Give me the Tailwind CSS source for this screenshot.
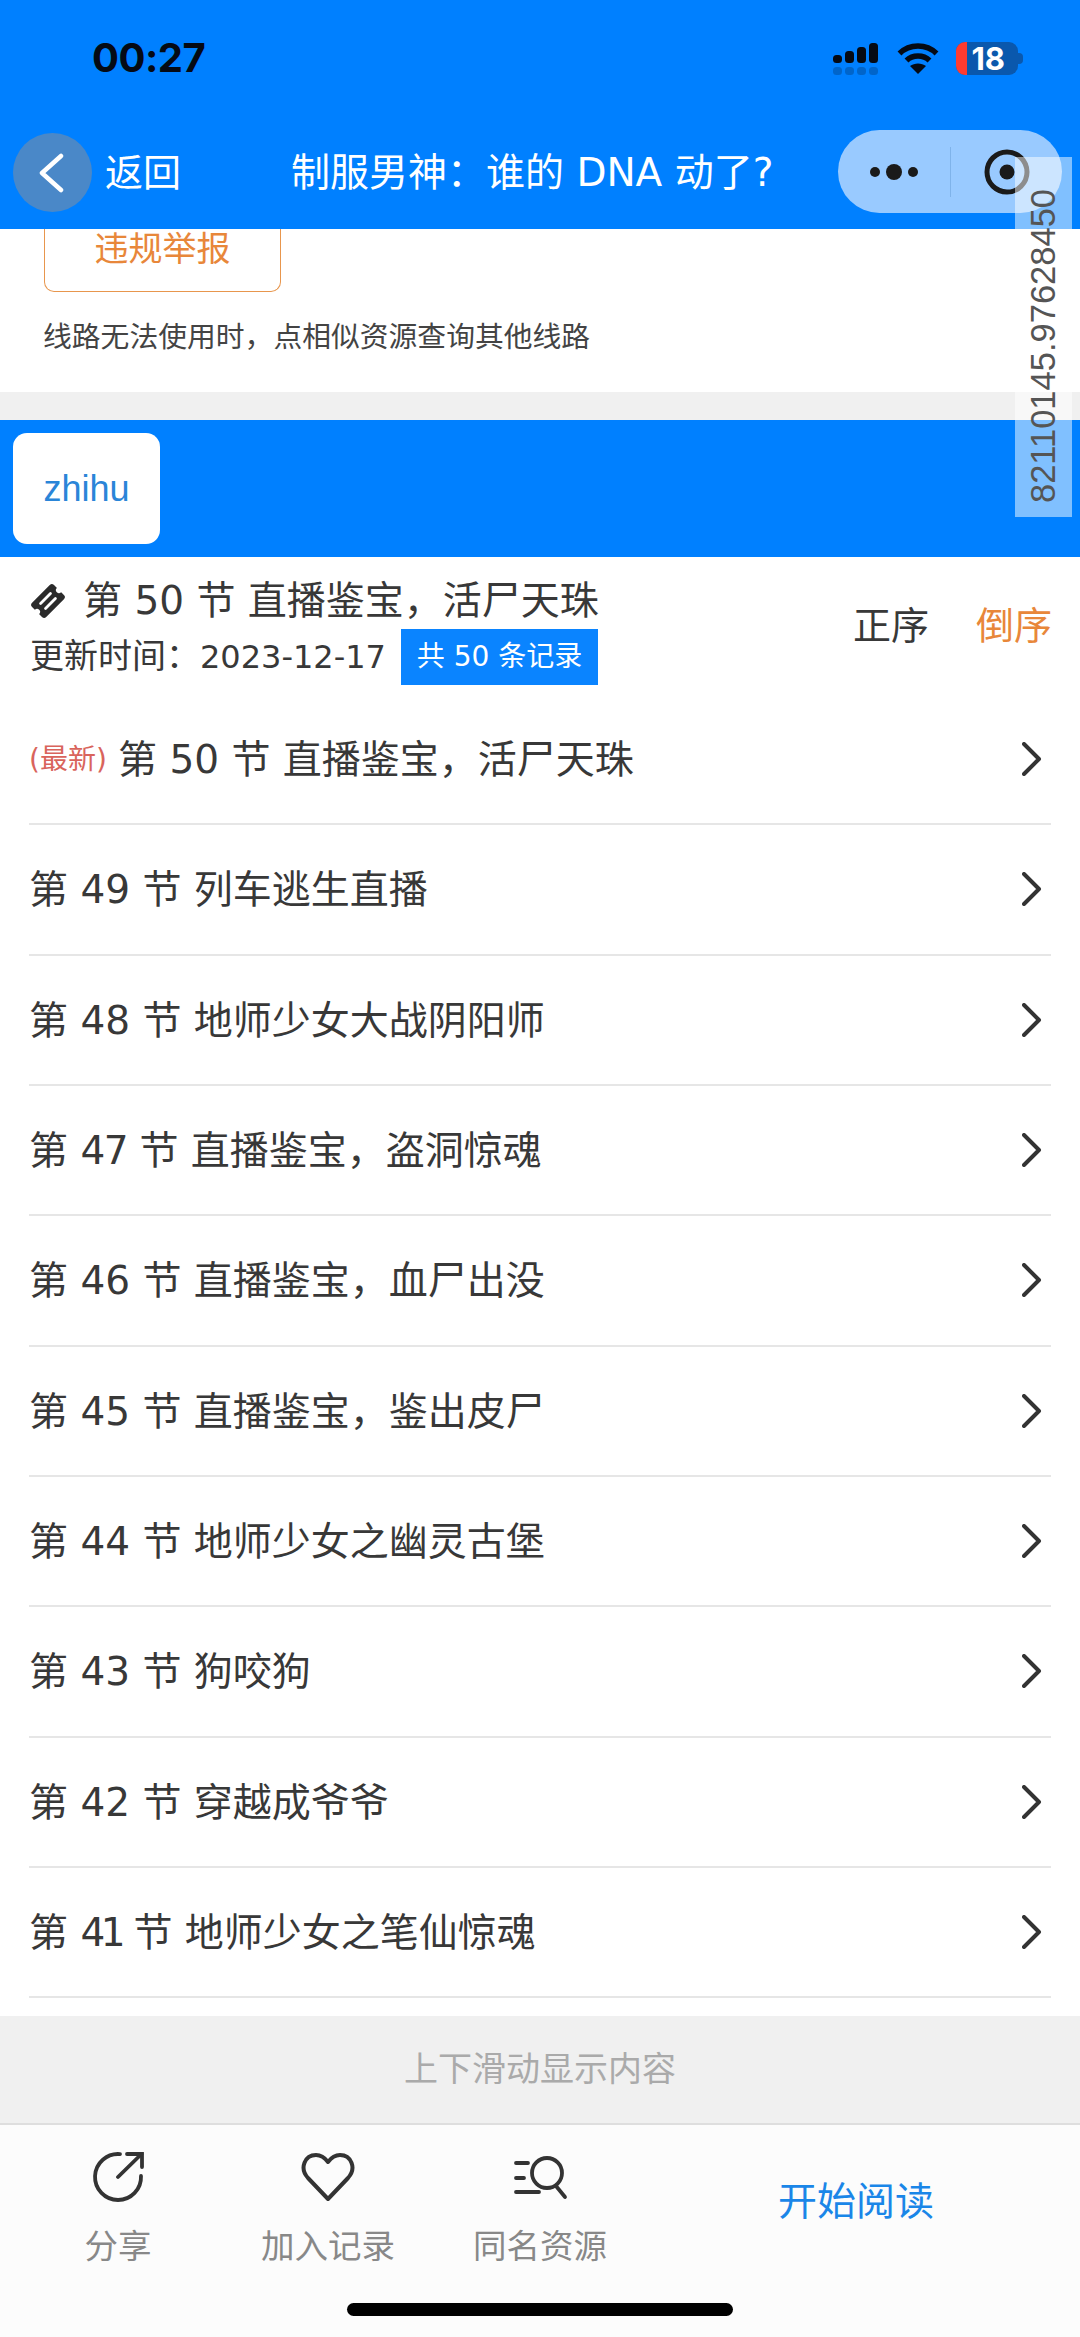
<!DOCTYPE html>
<html lang="zh">
<head>
<meta charset="utf-8">
<script src="https://cdn.jsdelivr.net/npm/@tailwindcss/browser@4"></script>
</head>
<body class="m-0">
<div class="relative w-[1080px] h-[2337px] overflow-hidden bg-white flex flex-col font-['DejaVu_Sans','Noto_Sans_CJK_SC',sans-serif] text-[#383838]">
  <!-- header -->
  <header class="relative z-10 h-[229px] shrink-0 bg-[#0080ff] flex flex-col">
    <div class="h-[130px] shrink-0 flex items-start justify-between">
      <span class="ml-[92px] mt-[33px] text-[40px] leading-[50px] font-bold text-[#050a14] font-['Inter','Liberation_Sans',sans-serif] tracking-[-0.5px]">00:27</span>
      <div class="mt-[42px] mr-[62px] flex items-start">
        <svg class="w-[46px] h-[34px] mr-[18px]" viewBox="0 0 46 34">
          <g fill="#050a14"><rect x="0" y="13" width="9" height="8" rx="3.5"/><rect x="12" y="9" width="9" height="12" rx="3.5"/><rect x="24" y="5" width="9" height="16" rx="3.5"/><rect x="36" y="1" width="9" height="20" rx="3.5"/></g>
          <g fill="#050a14" opacity=".22"><rect x="0" y="25" width="9" height="8" rx="3.5"/><rect x="12" y="25" width="9" height="8" rx="3.5"/><rect x="24" y="25" width="9" height="8" rx="3.5"/><rect x="36" y="25" width="9" height="8" rx="3.5"/></g>
        </svg>
        <svg class="w-[42px] h-[32px] mr-[17px]" viewBox="0 0 42 32" fill="none" stroke="#050a14" stroke-width="5.500">
          <path d="M2.500 11.500C12.500 1.500 29.500 1.500 39.500 11.500"/><path d="M9.500 18.500C15.500 12.500 26.500 12.500 32.500 18.500"/><path d="M21 32l-8-8c4.500-3.500 11.500-3.500 16 0z" fill="#050a14" stroke="none"/>
        </svg>
        <div class="relative w-[62px] h-[33px] rounded-[9px] bg-[#0a58ad] flex items-center justify-end pr-[13px]">
          <span class="absolute left-0 top-0 bottom-0 w-[11px] rounded-l-[9px] bg-[#ff3b30]"></span>
          <span class="text-[31px] leading-[33px] font-bold text-white font-['Inter','Liberation_Sans',sans-serif]">18</span>
          <span class="absolute -right-[5px] top-[11px] w-[5px] h-[11px] rounded-r-[4px] bg-[#0a58ad]"></span>
        </div>
      </div>
    </div>
    <div class="relative h-[99px] shrink-0">
      <div class="absolute left-[13px] top-[3px] w-[79px] h-[79px] rounded-full bg-[#4a88c8] flex items-center justify-center">
        <svg class="w-[26px] h-[40px] mr-[4px]" viewBox="0 0 26 40" fill="none" stroke="#fff" stroke-width="4.500" stroke-linecap="round" stroke-linejoin="round"><path d="M23 3L4 20l19 17"/></svg>
      </div>
      <span class="absolute left-[105px] top-[20px] text-[38px] leading-[46px] text-white">返回</span>
      <span class="absolute left-[291px] top-[20px] text-[39px] leading-[46px] text-white whitespace-nowrap">制服男神：谁的 DNA 动了?</span>
      <div class="absolute left-[838px] top-0 w-[224px] h-[83px] rounded-[42px] bg-[#99caff] flex items-center">
        <svg class="ml-[32px] w-[54px] h-[20px]" viewBox="0 0 54 20" fill="#1a1a1a"><circle cx="5" cy="10" r="5"/><circle cx="24" cy="10" r="8"/><circle cx="43" cy="10" r="5"/></svg>
        <span class="ml-[26px] w-px h-[50px] bg-[#7fb3ea]"></span>
        <svg class="ml-[33px] w-[46px] h-[46px]" viewBox="0 0 46 46"><circle cx="23" cy="23" r="20" fill="none" stroke="#1a1a1a" stroke-width="5"/><circle cx="23" cy="23" r="7.500" fill="#1a1a1a"/></svg>
      </div>
    </div>
  </header>

  <!-- top panel -->
  <section class="shrink-0 h-[163px] bg-white px-[43px] relative">
    <div class="ml-[1px] h-[63px] w-[237px] pb-[22px] border-x-[1.5px] border-b-[1.5px] border-[#e8964d] rounded-b-[10px] flex items-center justify-center text-[34px] leading-[40px] text-[#e8873a]">违规举报</div>
    <p class="mt-[26px] text-[28.800px] leading-[38px] text-[#444] whitespace-nowrap">线路无法使用时，点相似资源查询其他线路</p>
  </section>
  <div class="shrink-0 h-[28px] bg-[#f0f0f0]"></div>

  <!-- source tab -->
  <div class="shrink-0 h-[137px] bg-[#0080ff] pl-[13px] pt-[13px]">
    <div class="w-[147px] h-[111px] rounded-[14px] bg-white flex items-center justify-center text-[36px] text-[#2a85d8] font-['Liberation_Sans',sans-serif]">zhihu</div>
  </div>

  <!-- summary -->
  <section class="shrink-0 h-[138px] relative px-[30px]">
    <div class="flex items-center h-[44px] mt-[22px]">
      <svg class="w-[36px] h-[36px] mr-[17px] shrink-0" viewBox="0 0 36 36"><g transform="rotate(-45 18 18)"><rect x="2.500" y="8" width="31" height="20" rx="3" fill="#2b2b2b"/><circle cx="2.500" cy="18" r="3" fill="#fff"/><circle cx="33.500" cy="18" r="3" fill="#fff"/><path d="M11 14.500h14M11 21.500h14" stroke="#fff" stroke-width="2.800" stroke-linecap="round"/></g></svg>
      <span class="text-[39px] leading-[44px] whitespace-nowrap">第 50 节 直播鉴宝，活尸天珠</span>
    </div>
    <div class="flex items-center mt-[5px]">
      <span class="text-[34px] leading-[56px] whitespace-nowrap w-[371px]">更新时间：<span class="text-[32px]">2023-12-17</span></span>
      <span class="h-[56px] w-[197px] bg-[#0a84ff] text-white text-[28px] leading-[56px] text-center whitespace-nowrap">共 50 条记录</span>
    </div>
    <div class="absolute left-[853px] top-[46px] flex gap-[47px] text-[38px] leading-[46px]">
      <span>正序</span><span class="text-[#e8873a]">倒序</span>
    </div>
  </section>

  <!-- list -->
  <ul class="shrink-0 flex flex-col px-[29px]">
    <li class="h-[130.330px] border-b-[2px] border-[#e6e6e6] flex items-center justify-between"><span class="pt-[2px] text-[39px] leading-[48px] whitespace-nowrap flex items-center"><span class="text-[28px] text-[#d9645c] w-[89px]">(最新)</span>第 50 节 直播鉴宝，活尸天珠</span><svg class="w-[20px] h-[34px] mr-[9px]" viewBox="0 0 20 34" fill="none" stroke="#333" stroke-width="4" stroke-linecap="round" stroke-linejoin="round"><path d="M2 2l15 15L2 32"/></svg></li>
    <li class="h-[130.330px] border-b-[2px] border-[#e6e6e6] flex items-center justify-between"><span class="pt-[2px] text-[39px] leading-[48px] whitespace-nowrap">第 49 节 列车逃生直播</span><svg class="w-[20px] h-[34px] mr-[9px]" viewBox="0 0 20 34" fill="none" stroke="#333" stroke-width="4" stroke-linecap="round" stroke-linejoin="round"><path d="M2 2l15 15L2 32"/></svg></li>
    <li class="h-[130.330px] border-b-[2px] border-[#e6e6e6] flex items-center justify-between"><span class="pt-[2px] text-[39px] leading-[48px] whitespace-nowrap">第 48 节 地师少女大战阴阳师</span><svg class="w-[20px] h-[34px] mr-[9px]" viewBox="0 0 20 34" fill="none" stroke="#333" stroke-width="4" stroke-linecap="round" stroke-linejoin="round"><path d="M2 2l15 15L2 32"/></svg></li>
    <li class="h-[130.330px] border-b-[2px] border-[#e6e6e6] flex items-center justify-between"><span class="pt-[2px] text-[39px] leading-[48px] whitespace-nowrap">第 <span class="tracking-[-1.5px]">47</span> 节 直播鉴宝，盗洞惊魂</span><svg class="w-[20px] h-[34px] mr-[9px]" viewBox="0 0 20 34" fill="none" stroke="#333" stroke-width="4" stroke-linecap="round" stroke-linejoin="round"><path d="M2 2l15 15L2 32"/></svg></li>
    <li class="h-[130.330px] border-b-[2px] border-[#e6e6e6] flex items-center justify-between"><span class="pt-[2px] text-[39px] leading-[48px] whitespace-nowrap">第 46 节 直播鉴宝，血尸出没</span><svg class="w-[20px] h-[34px] mr-[9px]" viewBox="0 0 20 34" fill="none" stroke="#333" stroke-width="4" stroke-linecap="round" stroke-linejoin="round"><path d="M2 2l15 15L2 32"/></svg></li>
    <li class="h-[130.330px] border-b-[2px] border-[#e6e6e6] flex items-center justify-between"><span class="pt-[2px] text-[39px] leading-[48px] whitespace-nowrap">第 45 节 直播鉴宝，鉴出皮尸</span><svg class="w-[20px] h-[34px] mr-[9px]" viewBox="0 0 20 34" fill="none" stroke="#333" stroke-width="4" stroke-linecap="round" stroke-linejoin="round"><path d="M2 2l15 15L2 32"/></svg></li>
    <li class="h-[130.330px] border-b-[2px] border-[#e6e6e6] flex items-center justify-between"><span class="pt-[2px] text-[39px] leading-[48px] whitespace-nowrap">第 44 节 地师少女之幽灵古堡</span><svg class="w-[20px] h-[34px] mr-[9px]" viewBox="0 0 20 34" fill="none" stroke="#333" stroke-width="4" stroke-linecap="round" stroke-linejoin="round"><path d="M2 2l15 15L2 32"/></svg></li>
    <li class="h-[130.330px] border-b-[2px] border-[#e6e6e6] flex items-center justify-between"><span class="pt-[2px] text-[39px] leading-[48px] whitespace-nowrap">第 43 节 狗咬狗</span><svg class="w-[20px] h-[34px] mr-[9px]" viewBox="0 0 20 34" fill="none" stroke="#333" stroke-width="4" stroke-linecap="round" stroke-linejoin="round"><path d="M2 2l15 15L2 32"/></svg></li>
    <li class="h-[130.330px] border-b-[2px] border-[#e6e6e6] flex items-center justify-between"><span class="pt-[2px] text-[39px] leading-[48px] whitespace-nowrap">第 42 节 穿越成爷爷</span><svg class="w-[20px] h-[34px] mr-[9px]" viewBox="0 0 20 34" fill="none" stroke="#333" stroke-width="4" stroke-linecap="round" stroke-linejoin="round"><path d="M2 2l15 15L2 32"/></svg></li>
    <li class="h-[130.330px] border-b-[2px] border-[#e6e6e6] flex items-center justify-between"><span class="pt-[2px] text-[39px] leading-[48px] whitespace-nowrap">第 <span class="tracking-[-4.5px]">41</span> 节 地师少女之笔仙惊魂</span><svg class="w-[20px] h-[34px] mr-[9px]" viewBox="0 0 20 34" fill="none" stroke="#333" stroke-width="4" stroke-linecap="round" stroke-linejoin="round"><path d="M2 2l15 15L2 32"/></svg></li>
  </ul>

  <div class="flex-1"></div>

  <!-- hint -->
  <div class="shrink-0 h-[107px] bg-[#f0f0f0] flex items-center justify-center text-[34px] text-[#aaaaaa]">上下滑动显示内容</div>

  <!-- bottom bar -->
  <footer class="relative shrink-0 h-[214px] bg-[#fcfcfc] border-t-[2px] border-[#dedede]">
    <div class="flex pt-[26px]">
      <div class="w-[236px] flex flex-col items-center">
        <svg class="w-[52px] h-[52px]" viewBox="0 0 52 52" fill="none" stroke="#333" stroke-width="3.800" stroke-linecap="round"><path d="M28 3.100A23 23 0 1 0 49 25"/><path d="M26 26L49.500 3"/><path d="M35 3h15v13"/></svg>
        <span class="mt-[22px] text-[33.500px] leading-[44px] text-[#888]">分享</span>
      </div>
      <div class="w-[184px] flex flex-col items-center">
        <svg class="w-[54px] h-[52px]" viewBox="0 0 54 52" fill="none" stroke="#333" stroke-width="4" stroke-linejoin="round"><path d="M27 48L7 27C-2 17 4 4 15 4C20 4 24 7 27 11C30 7 34 4 39 4C50 4 56 17 47 27Z"/></svg>
        <span class="mt-[22px] text-[33.500px] leading-[44px] text-[#888]">加入记录</span>
      </div>
      <div class="w-[240px] flex flex-col items-center">
        <svg class="w-[56px] h-[52px]" viewBox="0 0 56 52" fill="none" stroke="#333" stroke-width="3.800" stroke-linecap="round"><circle cx="35" cy="22" r="15"/><path d="M44 35l9 11"/><path d="M4 12h12M4 27h8M4 41h23"/></svg>
        <span class="mt-[22px] text-[33.500px] leading-[44px] text-[#888]">同名资源</span>
      </div>
      <div class="ml-[118px] mt-[27px] text-[39px] leading-[48px] text-[#1a86e8]">开始阅读</div>
    </div>
    <div class="absolute left-[347px] top-[178px] w-[386px] h-[13px] rounded-full bg-black"></div>
  </footer>

  <!-- watermark -->
  <div class="absolute z-20 left-[1015px] top-[157px] w-[57px] h-[360px] bg-white/50 flex items-center justify-center">
    <span class="block translate-y-[9px] -rotate-90 whitespace-nowrap text-[34.500px] leading-[40px] text-[#555] font-['Liberation_Sans',sans-serif]">82110145.97628450</span>
  </div>
</div>
</body>
</html>
